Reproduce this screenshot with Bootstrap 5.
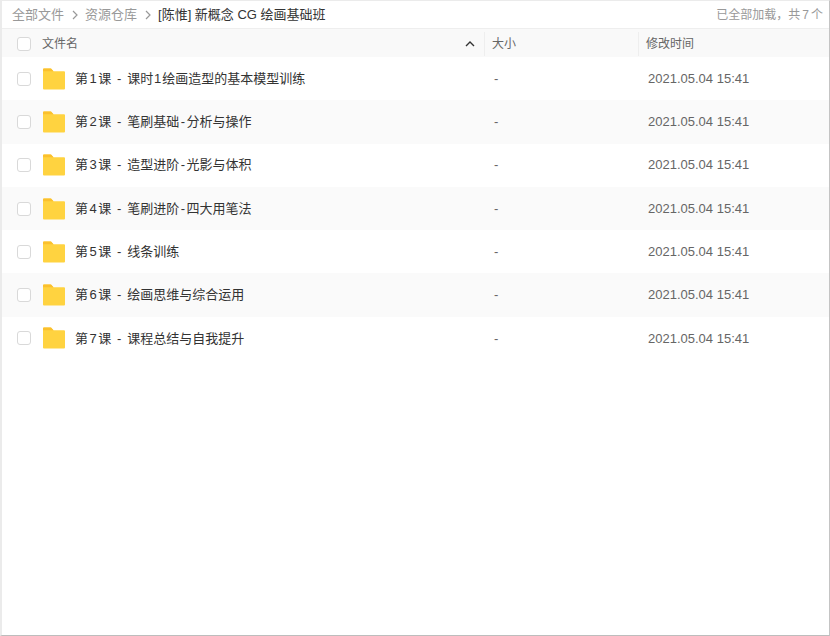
<!DOCTYPE html>
<html lang="zh"><head><meta charset="utf-8">
<link href="https://cdn.jsdelivr.net/npm/bootstrap@5.3.0/dist/css/bootstrap.min.css" rel="stylesheet">
<style>
html,body{height:100%;background:#fff}
body{font-family:"Liberation Sans","Noto Sans CJK SC",sans-serif;font-size:13px;color:#333;overflow:hidden}
.pane{height:636px;border:1px solid #ebebeb;border-left-width:2px;border-right-color:#c4c4c4;border-bottom-color:#bdbdbd}
.crumbs{height:27px;padding:0 6px 0 10px}
.crumb-text{color:#999}
.crumb-cur{color:#333}
.sep{margin:0 7px 0 8px;flex:none}
.loaded{color:#999;font-size:12px}
.head{height:29px;background:#f9f9f9;border-top:1px solid #eee;color:#666;font-size:12px;padding-top:1px}
.c-name{width:482px;flex:none;padding-left:15px}
.c-size{width:154px;flex:none;padding-left:7px}
.c-time{flex:1;padding-left:7px}
.vbar{border-left:1px solid #eee;height:24px;display:flex;align-items:center}
.rowx{height:43.3px;color:#333}
.rowx:nth-child(even){background:#fafafa}
.rowx .c-size{padding-left:10px;color:#666}
.rowx .c-time{padding-left:10px;color:#666}
.box{width:14px;height:14px;border:1px solid #d9d9d9;border-radius:3px;background:#fff;flex:none}
.foldr{margin:0 10px 0 12px;flex:none}
.hname{margin-left:11px;flex:1}
.caret{margin-right:9px}
.dg{margin:0 1.5px}
.dg2{margin:0 .9px}
.dg3{margin:0 2px}
.hy{margin:0 2.2px}
.hy2{margin:0 1.5px}
</style></head><body>
<div class="pane d-flex flex-column">
<div class="crumbs d-flex align-items-center justify-content-between">
<div class="d-flex align-items-center">
<span class="crumb-text">全部文件</span>
<svg class="sep" width="6" height="10" viewBox="0 0 6 10"><path d="M1 1l4 4-4 4" fill="none" stroke="#999" stroke-width="1.2"/></svg>
<span class="crumb-text">资源仓库</span>
<svg class="sep" width="6" height="10" viewBox="0 0 6 10"><path d="M1 1l4 4-4 4" fill="none" stroke="#999" stroke-width="1.2"/></svg>
<span class="crumb-cur">[陈惟] 新概念 CG 绘画基础班</span>
</div>
<span class="loaded">已全部加载，共<span class="dg3">7</span>个</span>
</div>
<div class="head d-flex align-items-center">
<div class="c-name d-flex align-items-center"><span class="box"></span><span class="hname">文件名</span>
<svg class="caret" width="10" height="6" viewBox="0 0 10 6"><path d="M1 5l4-4 4 4" fill="none" stroke="#333" stroke-width="1.4"/></svg></div>
<div class="c-size vbar">大小</div>
<div class="c-time vbar">修改时间</div>
</div>
<div>
<div class="rowx d-flex align-items-center"><div class="c-name d-flex align-items-center"><span class="box"></span><svg class="foldr" width="22" height="22" viewBox="0 0 23 22"><path d="M1 0h7l3 3h11a1 1 0 0 1 1 1v17a1 1 0 0 1-1 1H1a1 1 0 0 1-1-1V1a1 1 0 0 1 1-1z" fill="#ffd340"/><path d="M0 3h11L8.500 0H1a1 1 0 0 0-1 1z" fill="#fbc02d"/></svg><span>第<span class="dg">1</span>课 <span class="hy">-</span> 课时<span class="dg2">1</span>绘画造型的基本模型训练</span></div><div class="c-size">-</div><div class="c-time">2021.05.04 15:41</div></div>
<div class="rowx d-flex align-items-center"><div class="c-name d-flex align-items-center"><span class="box"></span><svg class="foldr" width="22" height="22" viewBox="0 0 23 22"><path d="M1 0h7l3 3h11a1 1 0 0 1 1 1v17a1 1 0 0 1-1 1H1a1 1 0 0 1-1-1V1a1 1 0 0 1 1-1z" fill="#ffd340"/><path d="M0 3h11L8.500 0H1a1 1 0 0 0-1 1z" fill="#fbc02d"/></svg><span>第<span class="dg">2</span>课 <span class="hy">-</span> 笔刷基础<span class="hy2">-</span>分析与操作</span></div><div class="c-size">-</div><div class="c-time">2021.05.04 15:41</div></div>
<div class="rowx d-flex align-items-center"><div class="c-name d-flex align-items-center"><span class="box"></span><svg class="foldr" width="22" height="22" viewBox="0 0 23 22"><path d="M1 0h7l3 3h11a1 1 0 0 1 1 1v17a1 1 0 0 1-1 1H1a1 1 0 0 1-1-1V1a1 1 0 0 1 1-1z" fill="#ffd340"/><path d="M0 3h11L8.500 0H1a1 1 0 0 0-1 1z" fill="#fbc02d"/></svg><span>第<span class="dg">3</span>课 <span class="hy">-</span> 造型进阶<span class="hy2">-</span>光影与体积</span></div><div class="c-size">-</div><div class="c-time">2021.05.04 15:41</div></div>
<div class="rowx d-flex align-items-center"><div class="c-name d-flex align-items-center"><span class="box"></span><svg class="foldr" width="22" height="22" viewBox="0 0 23 22"><path d="M1 0h7l3 3h11a1 1 0 0 1 1 1v17a1 1 0 0 1-1 1H1a1 1 0 0 1-1-1V1a1 1 0 0 1 1-1z" fill="#ffd340"/><path d="M0 3h11L8.500 0H1a1 1 0 0 0-1 1z" fill="#fbc02d"/></svg><span>第<span class="dg">4</span>课 <span class="hy">-</span> 笔刷进阶<span class="hy2">-</span>四大用笔法</span></div><div class="c-size">-</div><div class="c-time">2021.05.04 15:41</div></div>
<div class="rowx d-flex align-items-center"><div class="c-name d-flex align-items-center"><span class="box"></span><svg class="foldr" width="22" height="22" viewBox="0 0 23 22"><path d="M1 0h7l3 3h11a1 1 0 0 1 1 1v17a1 1 0 0 1-1 1H1a1 1 0 0 1-1-1V1a1 1 0 0 1 1-1z" fill="#ffd340"/><path d="M0 3h11L8.500 0H1a1 1 0 0 0-1 1z" fill="#fbc02d"/></svg><span>第<span class="dg">5</span>课 <span class="hy">-</span> 线条训练</span></div><div class="c-size">-</div><div class="c-time">2021.05.04 15:41</div></div>
<div class="rowx d-flex align-items-center"><div class="c-name d-flex align-items-center"><span class="box"></span><svg class="foldr" width="22" height="22" viewBox="0 0 23 22"><path d="M1 0h7l3 3h11a1 1 0 0 1 1 1v17a1 1 0 0 1-1 1H1a1 1 0 0 1-1-1V1a1 1 0 0 1 1-1z" fill="#ffd340"/><path d="M0 3h11L8.500 0H1a1 1 0 0 0-1 1z" fill="#fbc02d"/></svg><span>第<span class="dg">6</span>课 <span class="hy">-</span> 绘画思维与综合运用</span></div><div class="c-size">-</div><div class="c-time">2021.05.04 15:41</div></div>
<div class="rowx d-flex align-items-center"><div class="c-name d-flex align-items-center"><span class="box"></span><svg class="foldr" width="22" height="22" viewBox="0 0 23 22"><path d="M1 0h7l3 3h11a1 1 0 0 1 1 1v17a1 1 0 0 1-1 1H1a1 1 0 0 1-1-1V1a1 1 0 0 1 1-1z" fill="#ffd340"/><path d="M0 3h11L8.500 0H1a1 1 0 0 0-1 1z" fill="#fbc02d"/></svg><span>第<span class="dg">7</span>课 <span class="hy">-</span> 课程总结与自我提升</span></div><div class="c-size">-</div><div class="c-time">2021.05.04 15:41</div></div>
</div>
</div>
</body></html>
